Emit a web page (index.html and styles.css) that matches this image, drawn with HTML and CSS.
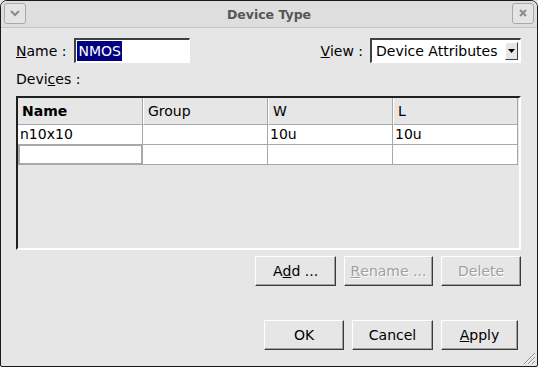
FILE: index.html
```html
<!DOCTYPE html>
<html>
<head>
<meta charset="utf-8">
<link rel="stylesheet" href="styles.css">
</head>
<body>
<div class="window">
  <div class="titlebar">
    <div class="tbtn">
      <svg width="12" height="8" viewBox="0 0 12 8"><path d="M2 2 L6 6 L10 2" fill="none" stroke="#8a8a8a" stroke-width="2"/></svg>
    </div>
    <div class="title">Device Type</div>
    <div class="tbtn">
      <svg width="10" height="10" viewBox="0 0 10 10"><path d="M2 2 L8 8 M8 2 L2 8" fill="none" stroke="#8a8a8a" stroke-width="2"/></svg>
    </div>
  </div>
  <div class="content">
    <div class="row1">
      <span class="label"><u>N</u>ame :</span>
      <div class="entry"><span class="sel">NMOS</span></div>
      <div class="spacer"></div>
      <span class="label"><u>V</u>iew :</span>
      <div class="combo">
        <span class="combo-text">Device Attributes</span>
        <span class="combo-btn"><svg width="7" height="4" viewBox="0 0 7 4"><path d="M0 0 H7 L3.5 4 Z" fill="#000"/></svg></span>
      </div>
    </div>
    <div class="label devices">Devi<u>c</u>es :</div>
    <div class="table">
      <div class="tr head">
        <div class="td">Name</div>
        <div class="td">Group</div>
        <div class="td">W</div>
        <div class="td">L</div>
      </div>
      <div class="tr">
        <div class="td">n10x10</div>
        <div class="td"></div>
        <div class="td">10u</div>
        <div class="td">10u</div>
      </div>
      <div class="tr">
        <div class="td focus"></div>
        <div class="td"></div>
        <div class="td"></div>
        <div class="td"></div>
      </div>
    </div>
    <div class="btnrow">
      <div class="btn w81">A<u>d</u>d ...</div>
      <div class="btn w89 dis"><u>R</u>ename ...</div>
      <div class="btn w80 dis">Delete</div>
    </div>
    <div class="btnrow bottom">
      <div class="btn w80">OK</div>
      <div class="btn w81">Cancel</div>
      <div class="btn w77"><u>A</u>pply</div>
    </div>
  </div>
  <svg class="grip" width="14" height="14" viewBox="0 0 14 14">
    <path d="M13 2 L2 13 M13 6 L6 13 M13 10 L10 13" stroke="#8a8a8a" stroke-width="1"/>
    <path d="M13 3 L3 13 M13 7 L7 13 M13 11 L11 13" stroke="#ffffff" stroke-width="1"/>
  </svg>
</div>
</body>
</html>
```
FILE: styles.css
```css
html, body {
  margin: 0;
  padding: 0;
  background: #e6e6e6;
}
body {
  font-family: "DejaVu Sans", sans-serif;
  font-size: 14px;
  color: #000;
}
.window {
  position: relative;
  width: 538px;
  height: 367px;
  box-sizing: border-box;
  border: 1px solid #1a1a1a;
  border-radius: 7px 7px 2px 2px;
  background: #e6e6e6;
  overflow: hidden;
}
.titlebar {
  height: 26px;
  background: #dedede;
  border-bottom: 1px solid #c4c4c4;
  display: flex;
  align-items: center;
  justify-content: space-between;
  padding: 0 3px;
}
.tbtn {
  width: 20px;
  height: 19px;
  border: 1px solid #a8a8a8;
  border-radius: 3px;
  background: #e4e4e4;
  display: flex;
  align-items: center;
  justify-content: center;
  margin-top: -2px;
}
.title {
  font-weight: bold;
  font-size: 12.5px;
  color: #555555;
}
.content {
  padding: 10px 16px 0 15px;
}
.row1 {
  display: flex;
  align-items: center;
  height: 25px;
}
.label u, .btn u { text-decoration: underline; }
.entry {
  width: 116px;
  height: 25px;
  box-sizing: border-box;
  margin-left: 8px;
  border-style: solid;
  border-width: 2px 1px 1px 2px;
  border-color: #404040 #ffffff #ffffff #404040;
  background: #fff;
  padding: 1px 1px;
  display: flex;
  align-items: stretch;
}
.sel {
  background: #000080;
  color: #fff;
  padding: 0 1px;
  line-height: 20px;
}
.spacer { flex: 1; }
.combo {
  width: 151px;
  height: 25px;
  box-sizing: border-box;
  margin-left: 7px;
  border-style: solid;
  border-width: 2px 1px 1px 2px;
  border-color: #404040 #ffffff #ffffff #404040;
  background: #fff;
  display: flex;
  align-items: center;
  justify-content: space-between;
  padding: 0 2px 0 4px;
}
.combo-btn {
  width: 11px;
  height: 16px;
  background: #e6e6e6;
  border-style: solid;
  border-width: 1px;
  border-color: #ffffff #404040 #404040 #ffffff;
  display: flex;
  align-items: center;
  justify-content: center;
}
.devices {
  margin-top: 8px;
  height: 17px;
  line-height: 17px;
}
.table {
  margin-top: 8px;
  width: 505px;
  height: 154px;
  box-sizing: border-box;
  border-style: solid;
  border-width: 2px;
  border-color: #202020 #ffffff #ffffff #202020;
  background: #e6e6e6;
}
.tr {
  display: flex;
}
.td {
  width: 125px;
  height: 20px;
  box-sizing: border-box;
  border-right: 1px solid #a8a8a8;
  border-bottom: 1px solid #a8a8a8;
  background: #fff;
  padding-left: 2px;
  line-height: 19px;
  white-space: nowrap;
}
.head .td {
  height: 27px;
  line-height: 26px;
  background: #e6e6e6;
  padding-left: 4px;
  border-left: 1px solid #ffffff;
}
.head .td:first-child { font-weight: bold; border-left: none; }
.td.focus {
  border: 2px solid #a8a8a8;
  border-top: 1px solid #a8a8a8;
}
.btnrow {
  display: flex;
  justify-content: flex-end;
  gap: 8px;
  margin-top: 6px;
  width: 505px;
}
.btnrow.bottom {
  margin-top: 34px;
  padding-right: 3px;
  box-sizing: border-box;
}
.btn {
  height: 30px;
  box-sizing: border-box;
  border-style: solid;
  border-width: 1px;
  border-color: #ffffff #3a3a3a #3a3a3a #ffffff;
  box-shadow: inset -1px -1px 0 #a0a0a0;
  background: #e6e6e6;
  display: flex;
  align-items: center;
  justify-content: center;
}
.btn.dis {
  color: #a0a0a0;
  text-shadow: 1px 1px 0 #ffffff;
}
.w77 { width: 77px; }
.w80 { width: 80px; }
.w81 { width: 81px; }
.w89 { width: 89px; }
.grip {
  position: absolute;
  right: 1px;
  bottom: 1px;
}
```
